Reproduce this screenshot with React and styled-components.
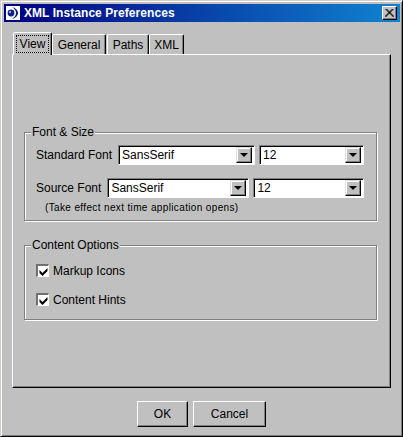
import React from "react";
import styled, { createGlobalStyle } from "styled-components";

const Global = createGlobalStyle`
  html, body { margin: 0; padding: 0; background: #c0c0c0; }
  * { box-sizing: border-box; }
`;

const Win = styled.div`
  width: 403px; height: 437px; background: #c0c0c0; display: flex; flex-direction: column;
  font-family: "Liberation Sans", Arial, sans-serif; font-size: 12px; color: #000;
  border-style: solid; border-width: 1px; border-color: #d4d0c8 #000 #000 #d4d0c8;
  box-shadow: inset 1px 1px 0 #fff, inset -1px -1px 0 #808080;
  padding: 3px 2px 2px 3px;
`;
const TitleBar = styled.div`
  height: 18px; flex: none; display: flex; align-items: center; padding: 0 3px 0 2px;
  background: linear-gradient(90deg, #000080, #1084d0); color: #fff;
  font-weight: bold; font-size: 12px; letter-spacing: 0.06px;
`;
const AppIcon = styled.svg`width: 14px; height: 14px; flex: none; margin-right: 4px;`;
const TitleText = styled.span`flex: 1; white-space: nowrap;`;
const CloseBtn = styled.div`
  width: 15px; height: 14px; background: #c0c0c0; display: flex; align-items: center; justify-content: center;
  border-style: solid; border-width: 1px; border-color: #fff #000 #000 #fff;
  box-shadow: inset -1px -1px 0 #808080;
`;
const Body = styled.div`
  flex: 1; display: flex; flex-direction: column; padding: 10px 8px 6px 8px;
`;
const TabRow = styled.div`
  display: flex; align-items: flex-end; height: 22px; padding-left: 1px; position: relative; z-index: 1; flex: none;
`;
const Tab = styled.div`
  height: ${p => (p.$active ? 23 : 20)}px;
  width: ${p => p.$w}px; margin-right: ${p => p.$mr}px;
  margin-bottom: ${p => (p.$active ? -1 : 0)}px;
  background: #c0c0c0; display: flex; align-items: center; justify-content: center;
  border-style: solid; border-width: 1px 1px 0 1px; border-color: #fff #000 transparent #fff;
  border-radius: 2px 2px 0 0;
  box-shadow: inset -1px 0 0 #808080;
  padding-bottom: ${p => (p.$active ? 1 : 0)}px;
`;
const FocusLabel = styled.span`
  ${p => p.$focus && "outline: 1px dotted #000; padding: 1px 3px; "}
  white-space: nowrap;
`;
const Panel = styled.div`
  width: 379px; height: 334px; flex: none; padding: 77px 13px 0 11px; display: flex; flex-direction: column; gap: 24px;
  border-style: solid; border-width: 1px; border-color: #fff #000 #000 #fff;
  box-shadow: inset -1px -1px 0 #808080;
`;
const Group = styled.fieldset`
  margin: 0; padding: 0; height: ${p => p.$h}px; position: relative;
  border: 1px solid #808080; box-shadow: 1px 1px 0 #fff, inset 1px 1px 0 #fff;
`;
const Legend = styled.span`
  position: absolute; left: 6px; top: -8px; background: #c0c0c0; padding: 0 1px; line-height: 14px;
  white-space: nowrap;
`;
const GroupBody = styled.div`
  display: flex; flex-direction: column; padding: ${p => p.$pt}px 0 0 11px;
`;
const FormRow = styled.div`
  display: flex; align-items: center; height: 20px; margin-bottom: 13px;
`;
const FieldLabel = styled.span`margin-right: 6px; white-space: nowrap;`;
const Combo = styled.div`
  width: ${p => p.$w}px; height: 20px; margin-right: 4px; flex: none; display: flex; align-items: center; background: #fff;
  border-style: solid; border-width: 1px; border-color: #808080 #fff #fff #808080;
  box-shadow: inset 1px 1px 0 #000;
  padding: 2px 2px 2px 2px;
`;
const ComboText = styled.span`flex: 1; padding-left: 1px;`;
const ComboBtn = styled.div`
  width: 16px; height: 16px; background: #c0c0c0; display: flex; align-items: center; justify-content: center;
  border-style: solid; border-width: 1px; border-color: #dfdfdf #000 #000 #dfdfdf;
  box-shadow: inset -1px -1px 0 #808080, inset 1px 1px 0 #fff;
`;
const Arrow = styled.div`
  width: 0; height: 0; border-style: solid; border-width: 4px 4px 0 4px; border-color: #000 transparent transparent transparent;
`;
const Note = styled.div`
  font-size: 10px; letter-spacing: 0.36px; margin: -9px 0 0 9px; line-height: 12px; white-space: nowrap;
`;
const CheckRow = styled.div`
  display: flex; align-items: center; height: 13px; margin-bottom: 16px;
`;
const Check = styled.div`
  width: 13px; height: 13px; background: #fff; flex: none; margin-right: 4px; display: flex; align-items: center; justify-content: center;
  border-style: solid; border-width: 2px 1px 1px 2px; border-color: #707070 #fff #fff #707070;
`;
const CheckLabel = styled.span`white-space: nowrap;`;
const Footer = styled.div`
  flex: 1; display: flex; gap: 5px; padding: 13px 0 0 125px;
`;
const Button = styled.div`
  width: ${p => p.$w}px; height: 26px; display: flex; align-items: center; justify-content: center;
  border-style: solid; border-width: 1px; border-color: #fff #000 #000 #fff;
  box-shadow: inset -1px -1px 0 #808080;
`;

const Combobox = ({ w, value }) => (
  <Combo $w={w}>
    <ComboText>{value}</ComboText>
    <ComboBtn><Arrow /></ComboBtn>
  </Combo>
);

const CheckItem = ({ label }) => (
  <CheckRow>
    <Check>
      <svg width="9" height="9" viewBox="0 0 9 9"><path d="M0.5 3 L3.5 6 L8.5 1 V4 L3.5 9 L0.5 6 Z" fill="#000" /></svg>
    </Check>
    <CheckLabel>{label}</CheckLabel>
  </CheckRow>
);

export default function App() {
  return (
    <Win>
      <Global />
      <TitleBar>
        <AppIcon viewBox="0 0 14 14">
          <rect width="14" height="14" fill="#fff" />
          <path d="M6 1 C10 2 12 4.5 12 7 C12 9.5 10 12 6 13 C9 11 10 9 10 7 C10 5 9 3 6 1 Z" fill="#0a1a70" />
          <circle cx="5" cy="7" r="3.4" fill="#10208a" />
          <circle cx="4" cy="6" r="1.2" fill="#8a9ae0" />
        </AppIcon>
        <TitleText>XML Instance Preferences</TitleText>
        <CloseBtn>
          <svg width="9" height="8" viewBox="0 0 9 8"><path d="M0.5 0 L8.5 8 M8.5 0 L0.5 8 M1.5 0 L9 7.5 M7.5 0 L0 7.5" stroke="#000" strokeWidth="1" fill="none" /></svg>
        </CloseBtn>
      </TitleBar>
      <Body>
        <TabRow>
          <Tab $active $w={39} $mr={0}><FocusLabel $focus>View</FocusLabel></Tab>
          <Tab $w={54} $mr={1}><FocusLabel>General</FocusLabel></Tab>
          <Tab $w={42} $mr={0}><FocusLabel>Paths</FocusLabel></Tab>
          <Tab $w={35} $mr={0}><FocusLabel>XML</FocusLabel></Tab>
        </TabRow>
        <Panel>
          <Group $h={89}>
            <Legend>Font &amp; Size</Legend>
            <GroupBody $pt={12}>
              <FormRow>
                <FieldLabel>Standard Font</FieldLabel>
                <Combobox w={137} value="SansSerif" />
                <Combobox w={105} value="12" />
              </FormRow>
              <FormRow>
                <FieldLabel>Source Font</FieldLabel>
                <Combobox w={142} value="SansSerif" />
                <Combobox w={111} value="12" />
              </FormRow>
              <Note>(Take effect next time application opens)</Note>
            </GroupBody>
          </Group>
          <Group $h={75}>
            <Legend>Content Options</Legend>
            <GroupBody $pt={18}>
              <CheckItem label="Markup Icons" />
              <CheckItem label="Content Hints" />
            </GroupBody>
          </Group>
        </Panel>
        <Footer>
          <Button $w={51}>OK</Button>
          <Button $w={73}>Cancel</Button>
        </Footer>
      </Body>
    </Win>
  );
}
